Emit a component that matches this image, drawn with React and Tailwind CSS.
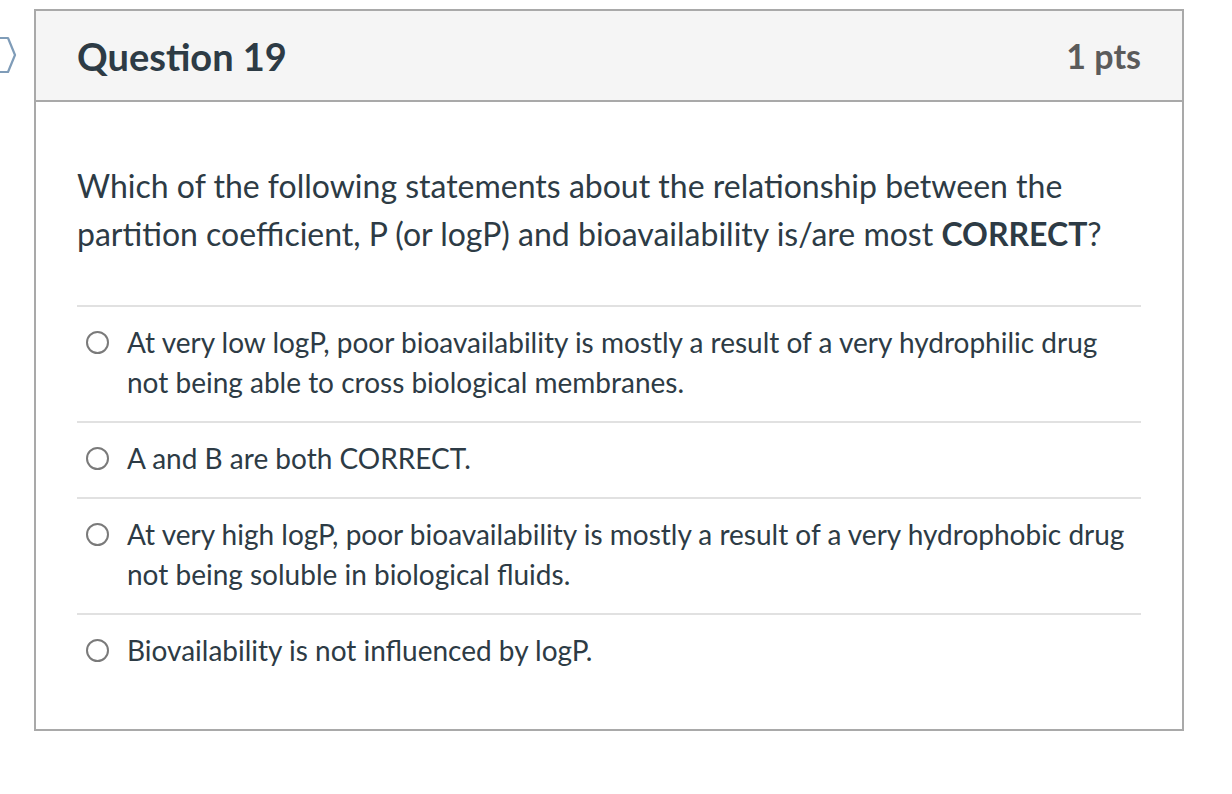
import React from "react";

const answers = [
  "At very low logP, poor bioavailability is mostly a result of a very hydrophilic drug not being able to cross biological membranes.",
  "A and B are both CORRECT.",
  "At very high logP, poor bioavailability is mostly a result of a very hydrophobic drug not being soluble in biological fluids.",
  "Biovailability is not influenced by logP.",
];

function Flag() {
  return (
    <svg
      className="absolute left-0 top-[36px]"
      width="18"
      height="38"
      viewBox="0 0 18 38"
      fill="none"
    >
      <path
        d="M-2 2 H8 L15 19 L8 36 H-2"
        stroke="#7f9cb8"
        strokeWidth="2.2"
        strokeLinejoin="round"
      />
    </svg>
  );
}

export default function App() {
  return (
    <div
      className="relative w-[1232px] h-[794px] bg-white text-[#2d3b45]"
      style={{ fontFamily: "Lato, 'Open Sans', sans-serif" }}
    >
      <Flag />

      <div className="ml-[34px] pt-[9px]">
        <div className="w-[1150px] border-2 border-[#a9a9a9]">
          {/* HEADER */}
          <div className="h-[91px] bg-[#f5f5f5] border-b-2 border-[#a9a9a9] px-[41px] flex items-center justify-between">
            <h2 className="text-[38px] font-bold leading-none">Question 19</h2>
            <div className="text-[34px] font-bold leading-none text-[#5b5b5b]">
              1 pts
            </div>
          </div>

          {/* BODY */}
          <div className="px-[41px] pt-[60px] pb-[40px]">
            <p className="text-[32px] leading-[48px]">
              Which of the following statements about the relationship between the
              partition coefficient, P (or logP) and bioavailability is/are most{" "}
              <strong className="font-bold">CORRECT</strong>?
            </p>

            <div className="mt-[47px]">
              {answers.map((a, i) => (
                <div
                  key={i}
                  className="border-t-2 border-[#e1e1e1] pt-[15px] pb-[19px] flex items-start"
                >
                  <div className="w-[50px] h-[40px] flex items-center pl-[9px] shrink-0">
                    <span className="w-[23px] h-[23px] rounded-full border-2 border-[#7a7a7a] bg-white" />
                  </div>
                  <div className="text-[28px] leading-[40px] flex-1">{a}</div>
                </div>
              ))}
            </div>
          </div>
        </div>
      </div>
    </div>
  );
}
